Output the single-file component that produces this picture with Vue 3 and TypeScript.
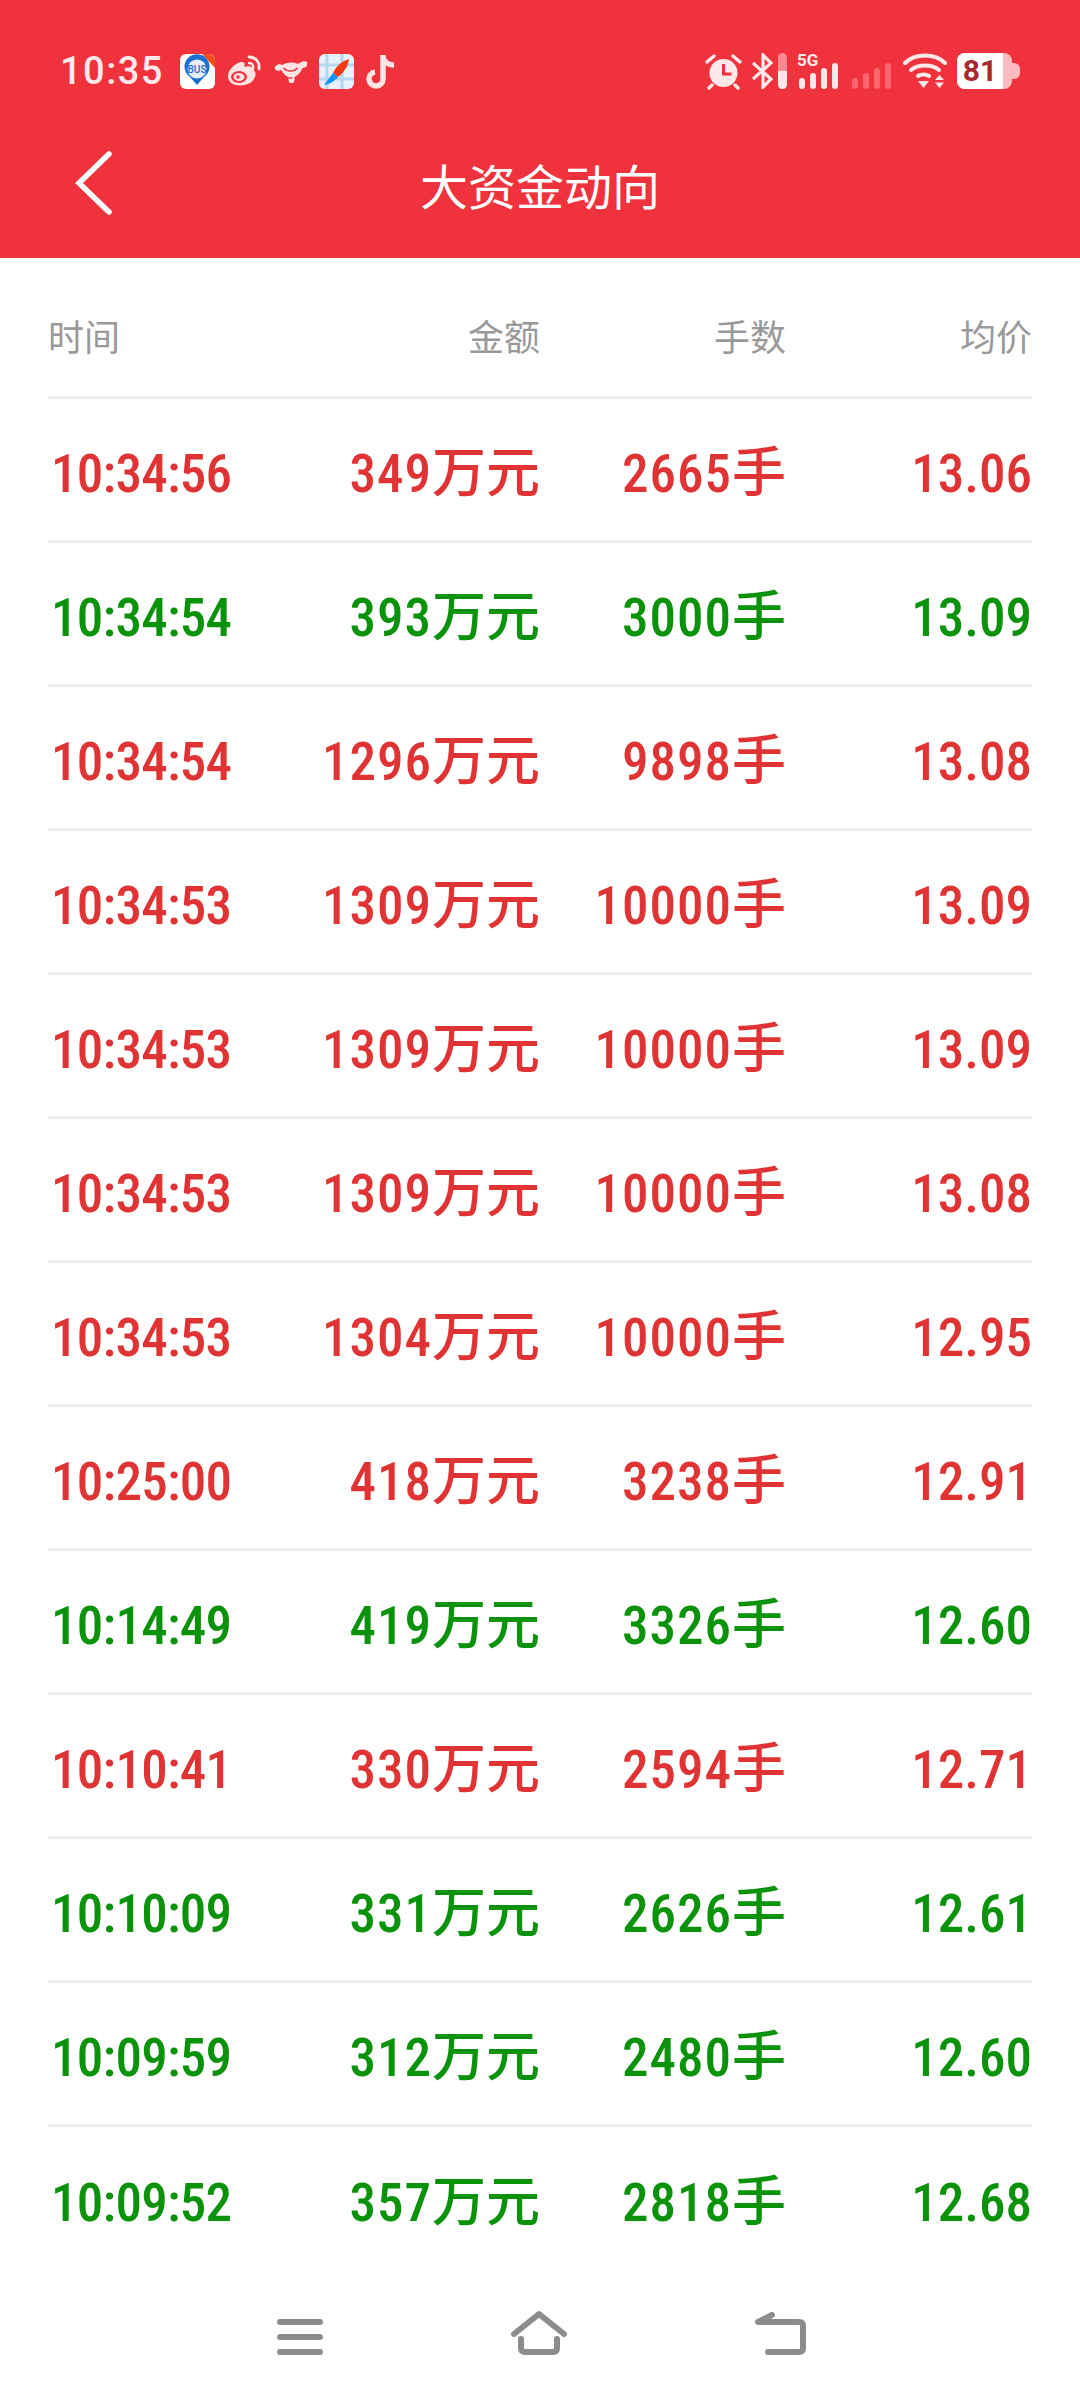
<template>
  <div class="page">
    <header class="top">
      <div class="status">
        <span class="clock">10:35</span>
        <div class="apps">
          <svg width="35" height="35" viewBox="0 0 35 35">
            <rect width="35" height="35" rx="6" fill="#fff" />
            <path d="M22 0h7a6 6 0 0 1 6 6v8z" fill="#f2511e" />
            <path d="M17 31l-7-8a12.500 12.500 0 1 1 14 0z" fill="#1c6fd0" />
            <circle cx="17" cy="15" r="9.500" fill="#e4effb" />
            <text x="17" y="18.500" class="bus">BUS</text>
          </svg>
          <svg width="36" height="32" viewBox="0 0 34 32" fill="none" stroke="#ffe4e6">
            <path d="M1 21C1 14 10 7 15 7c3 0 3 3 2 5 3-1 9-2 9 3 5 2 2 10-3 13-7 4-22 4-22-7z" fill="#ffe4e6" stroke="none" />
            <ellipse cx="12" cy="22" rx="8" ry="6" fill="#f1323e" stroke="none" />
            <ellipse cx="12" cy="22" rx="5.500" ry="4" fill="#ffe4e6" stroke="none" />
            <circle cx="11" cy="22" r="1.800" fill="#f1323e" stroke="none" />
            <path d="M22 2c6 0 11 4 10 12" stroke-width="2.800" stroke-linecap="round" />
            <path d="M22 8c3 0 5 2 4 6" stroke-width="2.400" stroke-linecap="round" />
          </svg>
          <svg width="35" height="28" viewBox="0 0 34 28">
            <path d="M1 10l4-3 4 1c5-3 11-3 15-1l6-3 4 1-1 5-4 1-1 2c-2 4-5 6-7 7v3l-1 3h-4l-1-3v-3c-3-1-6-4-7-7l-3 1-3-1z" fill="#ffe4e6" />
            <path d="M10 11c4 4 10 4 14 0" fill="none" stroke="#f1323e" stroke-width="1.600" />
            <path d="M15 21h4" stroke="#f1323e" stroke-width="1.400" />
          </svg>
          <svg width="35" height="35" viewBox="0 0 35 35">
            <rect width="35" height="35" rx="6" fill="#e6f1fb" />
            <path d="M8 0v35M23 0v35M0 11h35M0 25h35" stroke="#b5d8f2" stroke-width="3" />
            <path d="M30 5c-9 3-13 8-16 14l5 4c5-4 10-10 11-18z" fill="#f2380f" />
            <path d="M14 19L5 31c6-1 11-4 14-8z" fill="#1095f5" />
          </svg>
          <svg width="32" height="35" viewBox="0 0 30 35" fill="none" stroke="#ffe4e6" stroke-width="5.500">
            <path d="M17 1v24a7 7 0 1 1-8-7" />
            <path d="M17 3c1 5 5 8 11 8" />
          </svg>
        </div>
        <span class="grow"></span>
        <svg class="alarm" width="37" height="37" viewBox="0 0 37 37">
          <circle cx="18.500" cy="20" r="14" fill="#ffe8ea" />
          <path d="M18.500 11v10h8" fill="none" stroke="#f1323e" stroke-width="3" />
          <path d="M2 9l7-6M35 9l-7-6M7 32l-3 3M30 32l3 3" stroke="#ffe8ea" stroke-width="3.400" stroke-linecap="round" />
        </svg>
        <svg class="bt" width="21" height="36" viewBox="0 0 21 36" fill="none" stroke="#ffe8ea" stroke-width="3.200">
          <path d="M1 10l18 16-8 8V2l8 8L1 26" />
        </svg>
        <svg class="wifi-bar" width="9" height="36" viewBox="0 0 9 36">
          <rect width="9" height="36" rx="4.500" fill="#fb8a90" />
          <path d="M0 18h9v13.500a4.500 4.500 0 0 1-9 0z" fill="#ffe8ea" />
        </svg>
        <svg class="sig" width="41" height="36" viewBox="0 0 41 36">
          <text x="0" y="13" class="fiveg">5G</text>
          <rect x="2" y="25" width="6" height="11" rx="3" fill="#ffe8ea" />
          <rect x="13" y="20" width="6" height="16" rx="3" fill="#ffe8ea" />
          <rect x="24" y="15" width="6" height="21" rx="3" fill="#ffe8ea" />
          <rect x="35" y="10" width="6" height="26" rx="3" fill="#ffe8ea" />
        </svg>
        <svg class="sig2" width="40" height="36" viewBox="0 0 40 36">
          <rect x="0" y="25" width="6" height="11" rx="3" fill="#fb656d" />
          <rect x="11" y="20" width="6" height="16" rx="3" fill="#fb656d" />
          <rect x="22" y="15" width="6" height="21" rx="3" fill="#fb656d" />
          <rect x="33" y="10" width="6" height="26" rx="3" fill="#fb656d" />
        </svg>
        <svg class="wifi" width="44" height="36" viewBox="0 0 44 36" fill="none" stroke="#ffe8ea" stroke-linecap="round">
          <path d="M2 10C12 0 32 0 42 10" stroke-width="4" />
          <path d="M8 17c7-6 21-6 28 0" stroke-width="4" />
          <path d="M15 23c3-2 8-2 11 0" stroke-width="4" />
          <path d="M15 28h11l-5.500 7z" fill="#ffe8ea" stroke="none" />
          <path d="M32 27l4.500-5 4.500 5zM32 29.500h9l-4.500 5.500z" fill="#ffe8ea" stroke="none" />
        </svg>
        <div class="battery">
          <div class="cell"><span class="fill">81</span></div>
          <span class="nub"></span>
        </div>
      </div>
      <div class="bar">
        <svg class="back" width="38" height="66" viewBox="0 0 38 66" fill="none" stroke="#fff" stroke-width="5.500" stroke-linecap="round">
          <path d="M35 4L5 33l30 29" />
        </svg>
        <span class="title">大资金动向</span>
      </div>
    </header>

    <main class="list">
      <div class="row head">
        <span>时间</span><span>金额</span><span>手数</span><span>均价</span>
      </div>
      <div v-for="(r, i) in rows" :key="i" class="row" :class="r.up ? 'up' : 'down'">
        <span class="time">{{ r.time }}</span>
        <span class="num">{{ r.amount }}<i class="unit">万元</i></span>
        <span class="num">{{ r.hands }}<i class="unit">手</i></span>
        <span>{{ r.price }}</span>
      </div>
    </main>

    <footer class="nav">
      <svg width="46" height="50" viewBox="0 0 46 50" fill="none" stroke="#8c8c8c" stroke-width="6" stroke-linecap="round">
        <path d="M3 12h40M3 27h40M3 42h40" />
      </svg>
      <svg width="56" height="50" viewBox="0 0 56 50" fill="none" stroke="#8c8c8c" stroke-width="6" stroke-linecap="round" stroke-linejoin="round">
        <path d="M3 24L28 4l25 20" />
        <path d="M10 29v9q0 4 4 4h28q4 0 4-4v-9" />
      </svg>
      <svg width="52" height="50" viewBox="0 0 52 50" fill="none" stroke="#8c8c8c" stroke-width="6" stroke-linecap="round" stroke-linejoin="round">
        <path d="M17 5L3 12h41q4 0 4 4v22q0 4-4 4H13" />
      </svg>
    </footer>
  </div>
</template>

<script setup lang="ts">
interface Row {
  time: string
  amount: number
  hands: number
  price: string
  up: boolean
}

const rows: Row[] = [
  { time: '10:34:56', amount: 349, hands: 2665, price: '13.06', up: true },
  { time: '10:34:54', amount: 393, hands: 3000, price: '13.09', up: false },
  { time: '10:34:54', amount: 1296, hands: 9898, price: '13.08', up: true },
  { time: '10:34:53', amount: 1309, hands: 10000, price: '13.09', up: true },
  { time: '10:34:53', amount: 1309, hands: 10000, price: '13.09', up: true },
  { time: '10:34:53', amount: 1309, hands: 10000, price: '13.08', up: true },
  { time: '10:34:53', amount: 1304, hands: 10000, price: '12.95', up: true },
  { time: '10:25:00', amount: 418, hands: 3238, price: '12.91', up: true },
  { time: '10:14:49', amount: 419, hands: 3326, price: '12.60', up: false },
  { time: '10:10:41', amount: 330, hands: 2594, price: '12.71', up: true },
  { time: '10:10:09', amount: 331, hands: 2626, price: '12.61', up: false },
  { time: '10:09:59', amount: 312, hands: 2480, price: '12.60', up: false },
  { time: '10:09:52', amount: 357, hands: 2818, price: '12.68', up: false },
]
</script>

<style>
html,
body {
  margin: 0;
  background: #fff;
}
</style>

<style scoped>
.page {
  width: 1080px;
  height: 2400px;
  display: flex;
  flex-direction: column;
  overflow: hidden;
  font-family: "Roboto", "Noto Sans CJK SC", sans-serif;
  background: #fff;
}

.top {
  height: 258px;
  flex: none;
  background: #f0323c;
}

.status {
  height: 100px;
  padding: 42px 60px 0 60px;
  box-sizing: border-box;
  display: flex;
  align-items: center;
}

.status svg {
  flex: none;
  display: block;
}

.clock {
  font-size: 38px;
  font-weight: 500;
  letter-spacing: 1.5px;
  color: #ffe8ea;
  margin-right: 16px;
}

.apps {
  display: flex;
  align-items: center;
  gap: 11px;
}

.grow {
  flex: 1;
}

.bt {
  margin-left: 10px;
}

.wifi-bar {
  margin-left: 5px;
}

.status .sig {
  margin-left: 10px;
  overflow: visible;
}

.sig2 {
  margin-left: 14px;
}

.wifi {
  margin-left: 11px;
}

.bus {
  font-family: "Roboto", sans-serif;
  font-size: 10px;
  font-weight: 500;
  fill: #1c6fd0;
  text-anchor: middle;
}

.fiveg {
  font-family: "Roboto", sans-serif;
  font-size: 17px;
  font-weight: 700;
  fill: #ffe8ea;
}

.battery {
  display: flex;
  align-items: center;
  margin-left: 10px;
  flex: none;
}

.cell {
  width: 55px;
  height: 36px;
  border-radius: 8px;
  background: #ffbcc0;
  overflow: hidden;
}

.fill {
  display: block;
  width: 46px;
  height: 36px;
  background: #fff;
  color: #a8282f;
  font-size: 30px;
  font-weight: 700;
  line-height: 36px;
  text-align: center;
}

.nub {
  width: 8px;
  height: 16px;
  background: #ffbcc0;
  border-radius: 0 6px 6px 0;
}

.bar {
  height: 158px;
  box-sizing: border-box;
  padding-top: 10px;
  display: flex;
  align-items: center;
  justify-content: center;
  position: relative;
}

.back {
  position: absolute;
  left: 74px;
  top: 50px;
}

.title {
  font-size: 48px;
  color: #fff;
}

.list {
  flex: 1;
  overflow: hidden;
  padding: 0 48px;
}

.row {
  display: grid;
  grid-template-columns: repeat(4, 246px);
  height: 144px;
  box-sizing: border-box;
  padding-top: 8px;
  align-items: center;
  border-bottom: 3px solid #eeeeee;
  font-size: 53px;
  line-height: 64px;
  font-weight: 500;
  font-stretch: 75%;
  white-space: nowrap;
}

.row:last-child {
  border-bottom: none;
}

.row span {
  text-align: right;
}

.row span:first-child {
  text-align: left;
}

.row .time {
  padding-left: 3px;
  letter-spacing: -0.7px;
}

.row .num {
  letter-spacing: 1px;
}

.unit {
  font-size: 54px;
  line-height: 1;
  font-style: normal;
  font-weight: 500;
  letter-spacing: 0;
}

.row.head {
  height: 141px;
  font-size: 36px;
  font-weight: 400;
  font-stretch: normal;
  color: #999;
  padding-top: 23px;
}

.up {
  color: #e03434;
}

.down {
  color: #0a930a;
}

.nav {
  height: 130px;
  flex: none;
  box-sizing: border-box;
  padding-left: 4px;
  background: #fff;
  display: flex;
  align-items: center;
  justify-content: center;
  gap: 188px;
}
</style>
